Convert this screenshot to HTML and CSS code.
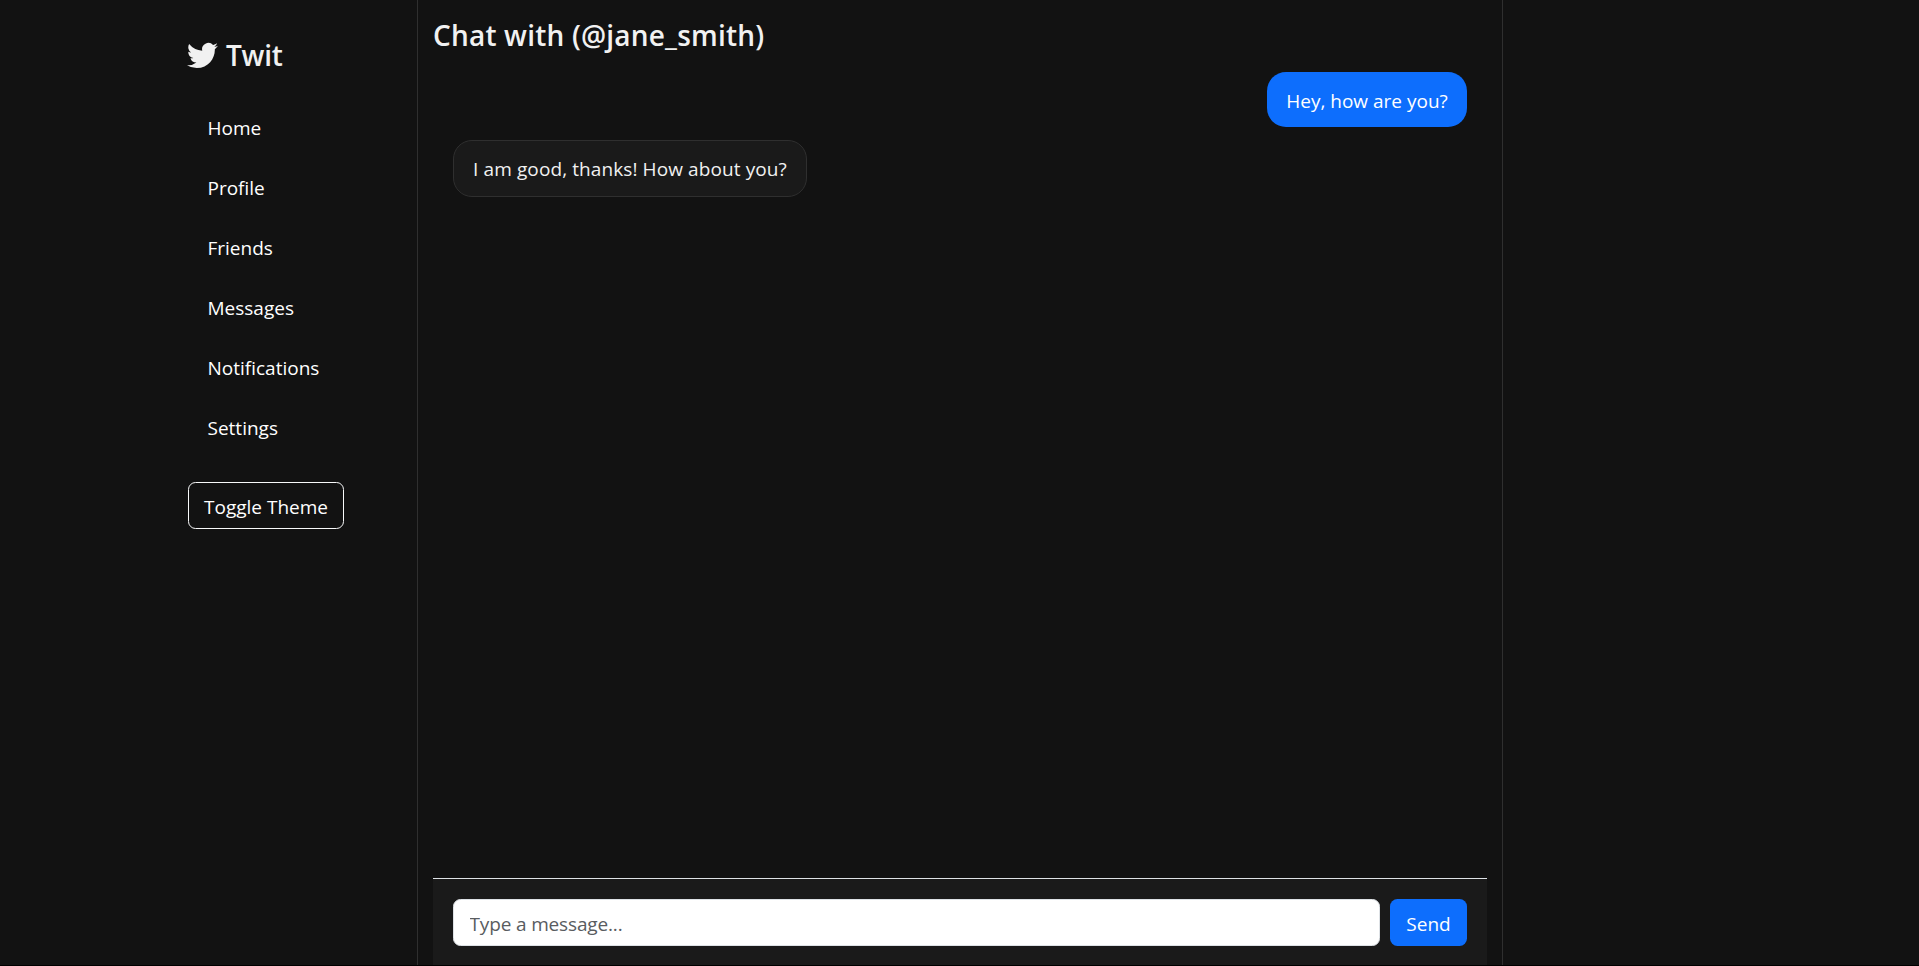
FILE: index.html
```html
<!DOCTYPE html>
<html lang="en">
<head>
<meta charset="utf-8">
<title>Twit - Chat</title>
<link rel="stylesheet" href="styles.css">
</head>
<body>
<div class="layout">
  <aside class="sidebar">
    <h3 class="brand">
      <svg class="brand-icon" viewBox="0 0 16 16" fill="currentColor"><path d="M5.026 15c6.038 0 9.341-5.003 9.341-9.334q.002-.211-.006-.422A6.7 6.7 0 0 0 16 3.542a6.7 6.7 0 0 1-1.889.518 3.3 3.3 0 0 0 1.447-1.817 6.5 6.5 0 0 1-2.087.793A3.286 3.286 0 0 0 7.875 6.03a9.32 9.32 0 0 1-6.767-3.429 3.29 3.29 0 0 0 1.018 4.382A3.3 3.3 0 0 1 .64 6.575v.045a3.29 3.29 0 0 0 2.632 3.218 3.2 3.2 0 0 1-.865.115 3 3 0 0 1-.614-.057 3.28 3.28 0 0 0 3.067 2.277A6.6 6.6 0 0 1 .78 13.58a6 6 0 0 1-.78-.045A9.34 9.34 0 0 0 5.026 15"/></svg>
      <span>Twit</span>
    </h3>
    <nav class="nav">
      <a class="nav-link">Home</a>
      <a class="nav-link">Profile</a>
      <a class="nav-link">Friends</a>
      <a class="nav-link">Messages</a>
      <a class="nav-link">Notifications</a>
      <a class="nav-link">Settings</a>
    </nav>
    <button class="btn btn-outline">Toggle Theme</button>
  </aside>
  <main class="chat">
    <h3 class="chat-title">Chat with (@jane_smith)</h3>
    <div class="messages">
      <div class="message sent">Hey, how are you?</div>
      <div class="message received">I am good, thanks! How about you?</div>
    </div>
    <form class="composer">
      <input class="field" type="text" placeholder="Type a message...">
      <button class="btn btn-primary" type="button">Send</button>
    </form>
  </main>
</div>
</body>
</html>
```
FILE: styles.css
```css
* { box-sizing: border-box; }
body {
  margin: 0;
  height: 966px;
  overflow: hidden;
  background: #121212;
  color: #f1f1f1;
  font: 19px/30px "Open Sans", "Noto Sans", sans-serif;
  border-bottom: 1px solid #000;
}
.layout { display: flex; height: 100%; }
.sidebar { width: 417px; padding: 34px 0 0 187px; }
.brand {
  display: flex;
  align-items: center;
  gap: 8px;
  height: 42px;
  margin: 0 0 27px;
  font-size: 28px;
  font-weight: 600;
  line-height: 42px;
  letter-spacing: -0.2px;
}
.brand-icon { width: 31px; height: 31px; margin-bottom: 2px; }
.nav { display: flex; flex-direction: column; gap: 10px; margin-bottom: 29px; }
.nav-link { height: 50px; padding: 10px 20.5px; color: #fff; }
.btn {
  height: 47px;
  padding: 2px 0 0;
  border-radius: 7.5px;
  color: #fff;
  font: inherit;
}
.btn-outline { width: 156px; margin-left: 1px; border: 1px solid #f8f9fa; background: transparent; }
.btn-primary { width: 77px; border: 0; background: #0d6efd; }
.chat {
  display: flex;
  flex-direction: column;
  width: 1086px;
  padding: 14px 15px 0;
  border: solid #2f2f2f;
  border-width: 0 1px;
}
.chat-title {
  margin: 0 0 1px;
  font-size: 28px;
  font-weight: 600;
  line-height: 42px;
  letter-spacing: 0.2px;
}
.messages {
  display: flex;
  flex: 1;
  flex-direction: column;
  align-items: flex-start;
  gap: 13px;
  padding: 15px 20px;
}
.message { padding: 14px 0 0; border-radius: 19px; text-align: center; white-space: nowrap; }
.sent { align-self: flex-end; width: 200px; height: 55px; background: #0d6efd; color: #fff; }
.received {
  width: 354px;
  height: 57px;
  padding-top: 13px;
  border: 1px solid #2f2f2f;
  background: #1a1a1a;
  letter-spacing: 0.1px;
}
.composer {
  display: flex;
  gap: 10px;
  height: 87px;
  padding: 20px 20px 0;
  border-top: 1px solid #dee2e6;
  background: #1a1a1a;
}
.field {
  flex: 1;
  height: 47px;
  padding: 3px 15.5px 0;
  border: 1px solid #dee2e6;
  border-radius: 7.5px;
  background: #fff;
  font: inherit;
  letter-spacing: -0.15px;
}
.field::placeholder { color: #595c5f; opacity: 1; }
```
